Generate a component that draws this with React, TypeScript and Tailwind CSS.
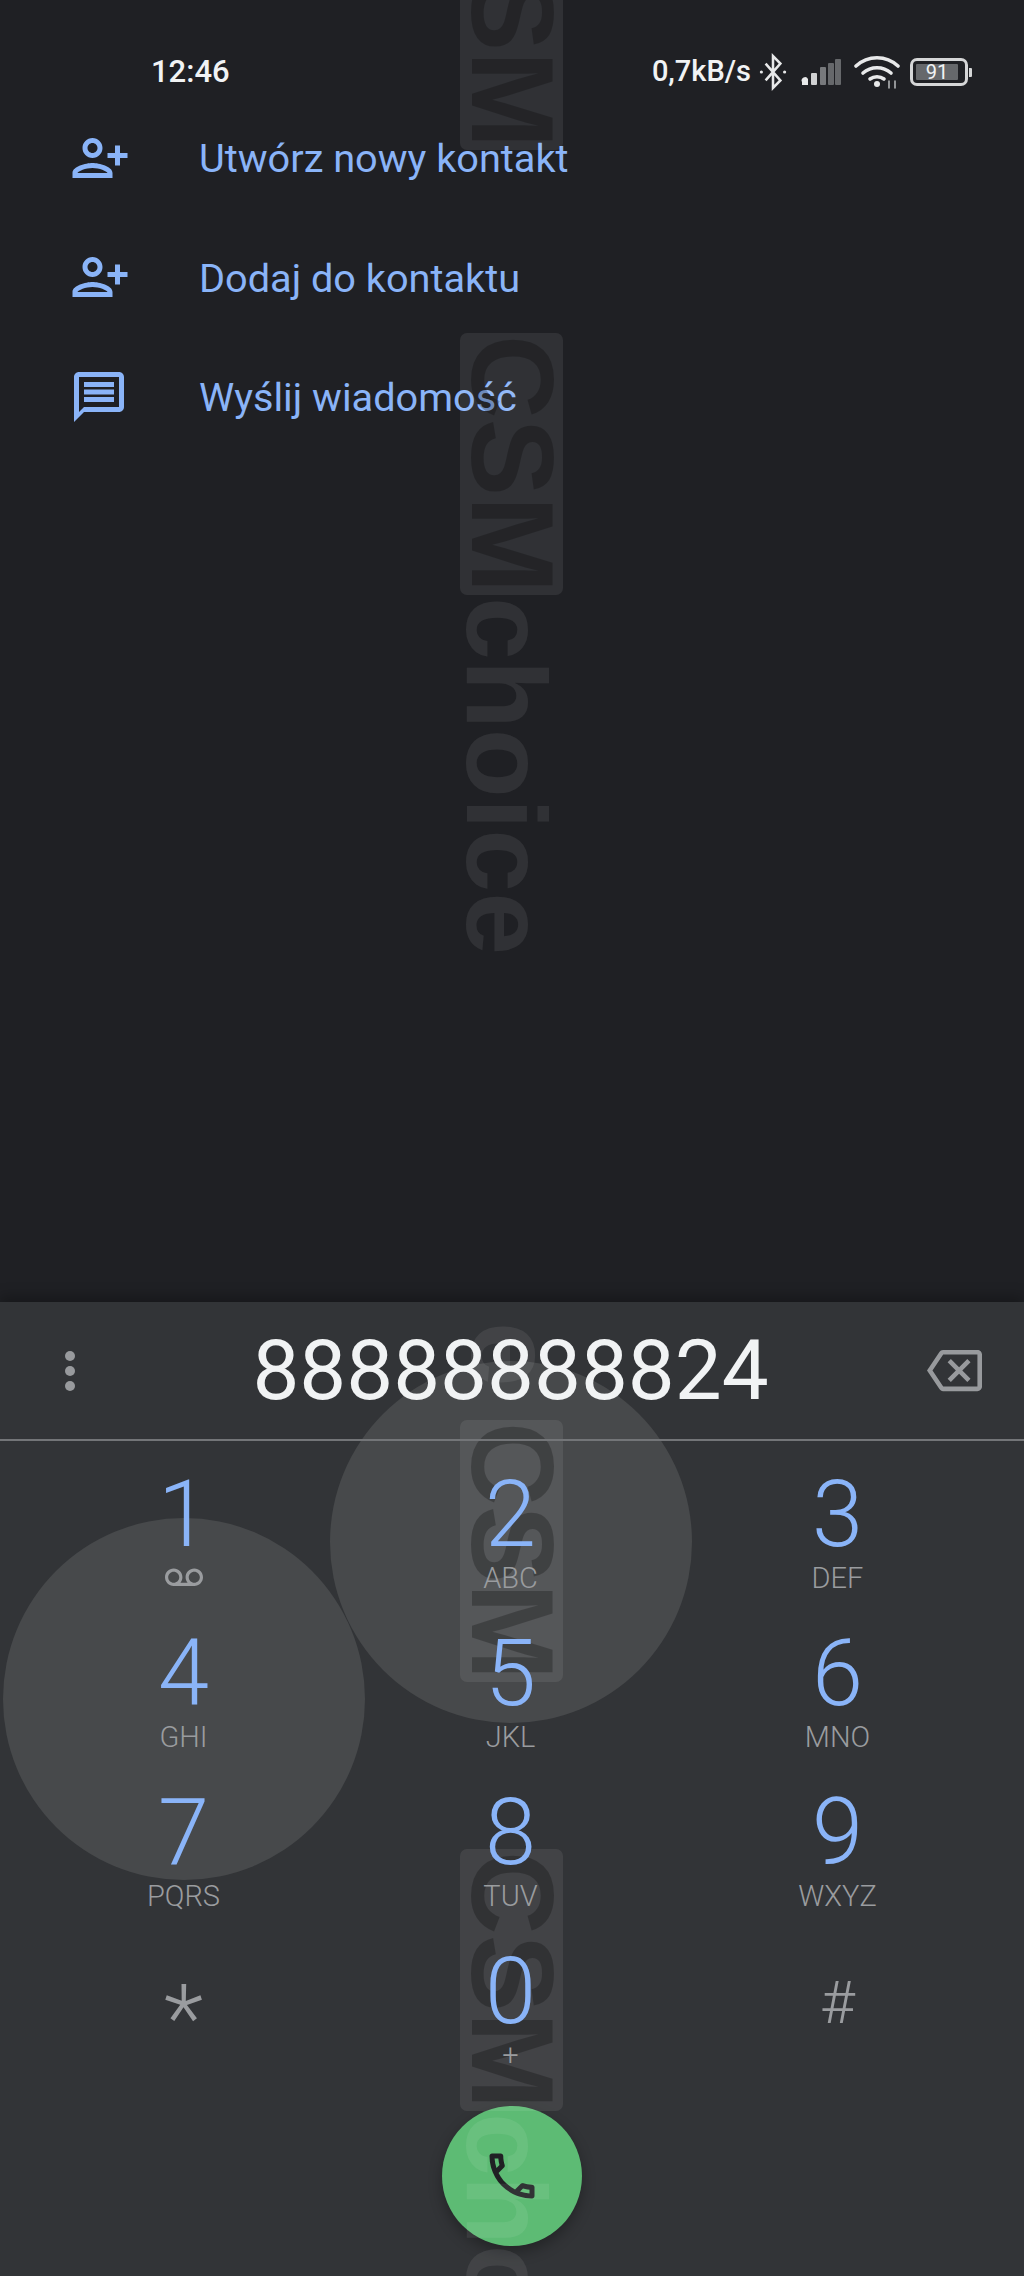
const keys = [
  { digit: "1", label: "" },
  { digit: "2", label: "ABC" },
  { digit: "3", label: "DEF" },
  { digit: "4", label: "GHI" },
  { digit: "5", label: "JKL" },
  { digit: "6", label: "MNO" },
  { digit: "7", label: "PQRS" },
  { digit: "8", label: "TUV" },
  { digit: "9", label: "WXYZ" },
];

function PersonAddIcon() {
  return (
    <svg width="60" height="60" viewBox="0 0 24 24" fill="#8ab4f8">
      <g transform="translate(24 0) scale(-1 1)">
        <path d="M15 12c2.21 0 4-1.79 4-4s-1.79-4-4-4-4 1.79-4 4 1.79 4 4 4zm0-6c1.1 0 2 .9 2 2s-.9 2-2 2-2-.9-2-2 .9-2 2-2zm0 8c-2.67 0-8 1.34-8 4v2h16v-2c0-2.66-5.33-4-8-4zm-6 4c.22-.72 3.31-2 6-2 2.7 0 5.8 1.29 6 2H9zm-3-3v-3h3v-2H6V7H4v3H1v2h3v3h2z" />
      </g>
    </svg>
  );
}

function MessageIcon() {
  return (
    <svg width="60" height="60" viewBox="0 0 24 24" fill="#8ab4f8">
      <path d="M20 2H4c-1.1 0-2 .9-2 2v18l4-4h14c1.1 0 2-.9 2-2V4c0-1.1-.9-2-2-2zm0 14H6l-2 2V4h16v12z" />
      <rect x="6" y="6" width="12" height="2" />
      <rect x="6" y="9" width="12" height="2" />
      <rect x="6" y="12" width="12" height="2" />
    </svg>
  );
}

function StatusIcons() {
  return (
    <div className="flex items-center">
      <svg width="30" height="38" viewBox="0 0 28 36" fill="none" stroke="#e8e9ea" strokeWidth="2.4" className="ml-[7px]">
        <path d="M7 10l14 16-7 7V3l7 7L7 26" />
        <circle cx="3" cy="18" r="1.5" fill="#e8e9ea" stroke="none" />
        <circle cx="25" cy="18" r="1.5" fill="#e8e9ea" stroke="none" />
      </svg>
      <svg width="40" height="28" viewBox="0 0 40 28" className="ml-[13px]">
        <path d="M1 27v-3a3 3 0 0 1 6-3v6z" fill="#e8e9ea" />
        <rect x="10" y="15" width="6" height="12" rx="1" fill="#d0d1d2" />
        <rect x="19" y="9" width="6" height="18" rx="1" fill="#77797c" />
        <rect x="27" y="5" width="6" height="22" rx="1" fill="#66686b" />
        <rect x="34" y="1" width="6" height="26" rx="1" fill="#66686b" />
      </svg>
      <svg width="46" height="34" viewBox="0 0 46 34" fill="none" stroke="#e8e9ea" strokeWidth="3.6" strokeLinecap="round" className="ml-[13px]">
        <path d="M2 11c12-11 30-11 42 0" />
        <path d="M9 18c8-7 20-7 28 0" />
        <path d="M16 24c4-3 10-3 14 0" />
        <circle cx="23" cy="29" r="3" fill="#e8e9ea" stroke="none" />
        <path d="M35 26v7M41 26v7" strokeWidth="1.6" stroke="#b0b2b4" />
      </svg>
      <div className="ml-[10px] flex items-center">
        <div className="w-[58px] h-[28px] rounded-[7px] border-[3px] border-[#d5d6d7] p-[3px]">
          <div className="w-[42px] h-[16px] bg-[#66686b] rounded-[1px] flex items-center justify-center text-[20px] leading-none text-[#f1f3f4]">
            91
          </div>
        </div>
        <div className="w-[3px] h-[9px] ml-[1px] bg-[#d5d6d7] rounded-r-[1px]" />
      </div>
    </div>
  );
}

function Watermark({ top, tail }: { top: string; tail?: boolean }) {
  return (
    <div
      className={`absolute left-[460px] ${top} z-20 w-[103px] flex flex-row items-center pointer-events-none [writing-mode:vertical-rl] font-['Liberation_Sans',sans-serif] font-bold text-[116px] leading-[103px]`}
    >
      <div className="h-[262px] w-[103px] shrink-0 bg-white/8 rounded-[7px] flex items-center justify-center text-black/25">CSM</div>
      {tail && <div className="pt-[2px] pr-[13px] text-[113px] text-white/8">choice</div>}
    </div>
  );
}

export default function App() {
  return (
    <div className="relative w-[1024px] h-[2276px] overflow-hidden bg-[#1f2024] flex flex-col font-['Roboto',sans-serif]">
      {/* status bar */}
      <div className="h-[98px] pt-[46px] pl-[151px] pr-[52px] flex items-start justify-between text-[#f1f3f4]">
        <div className="h-[52px] flex items-center text-[31px] font-medium">12:46</div>
        <div className="h-[52px] flex items-center">
          <span className="text-[29px] font-medium">0,7kB/s</span>
          <StatusIcons />
        </div>
      </div>

      {/* actions */}
      <div className="flex-1 text-[39.7px] text-[#8ab4f8]">
        <div className="h-[119.5px] pl-[70px] flex items-center gap-[69px]">
          <PersonAddIcon />
          <span className="pt-[3px]">Utwórz nowy kontakt</span>
        </div>
        <div className="h-[119.5px] pl-[70px] flex items-center gap-[69px]">
          <PersonAddIcon />
          <span className="pt-[3px]">Dodaj do kontaktu</span>
        </div>
        <div className="h-[119.5px] pl-[69px] flex items-center gap-[70px]">
          <MessageIcon />
          <span className="pt-[3px]">Wyślij wiadomość</span>
        </div>
      </div>

      {/* dialer */}
      <div className="relative h-[974px] bg-[#323437] shadow-[0_-6px_12px_rgba(0,0,0,0.25)]">
        {/* touch ripples */}
        <div className="absolute left-[3px] top-[216px] w-[362px] h-[362px] rounded-full bg-[#47494b]" />
        <div className="absolute left-[330px] top-[59px] w-[362px] h-[362px] rounded-full bg-[#47494b]" />

        <div className="relative z-30 h-[137px] flex items-center">
          <div className="w-[140px] flex flex-col items-center gap-[5px]">
            <div className="w-[10px] h-[10px] rounded-full bg-[#989a9d]" />
            <div className="w-[10px] h-[10px] rounded-full bg-[#989a9d]" />
            <div className="w-[10px] h-[10px] rounded-full bg-[#989a9d]" />
          </div>
          <div className="flex-1 pr-[3px] text-center text-[83.5px] leading-none text-[#f1f3f4]">88888888824</div>
          <div className="w-[140px] flex justify-center">
            <svg width="55" height="55" viewBox="0 0 24 24" fill="#989a9d">
              <path d="M22 3H7c-.69 0-1.23.35-1.59.88L0 12l5.41 8.11c.36.53.9.89 1.59.89h15c1.1 0 2-.9 2-2V5c0-1.1-.9-2-2-2zm0 16H7.07L2.4 12l4.66-7H22v14zm-11.59-2L14 13.41 17.59 17 19 15.59 15.41 12 19 8.41 17.59 7 14 10.59 10.41 7 9 8.41 12.59 12 9 15.59z" />
            </svg>
          </div>
        </div>
        <div className="relative z-30 h-[2px] bg-[#737578]" />

        <div className="relative z-30 pt-[20px] pl-[20px] pr-[23px] grid grid-cols-3 auto-rows-[159px] text-[#9a9c9f]">
          {keys.map((k) => (
            <div key={k.digit} className="flex flex-col items-center">
              <div className="h-[104px] pt-[4px] flex items-center text-[92px] leading-none font-[350] text-[#8ab4f8]">{k.digit}</div>
              <div className="h-[26px] flex items-center text-[29px] leading-none font-[350]">
                {k.label || (
                  <svg width="38" height="38" viewBox="0 0 24 24" fill="#9a9c9f">
                    <path d="M18.5 6C15.46 6 13 8.46 13 11.5c0 1.33.47 2.55 1.26 3.5H9.74c.79-.95 1.26-2.17 1.26-3.5C11 8.46 8.54 6 5.5 6S0 8.46 0 11.5 2.46 17 5.5 17h13c3.04 0 5.5-2.46 5.5-5.5S21.54 6 18.5 6zm-13 9C3.57 15 2 13.43 2 11.5S3.57 8 5.5 8 9 9.57 9 11.5 7.43 15 5.5 15zm13 0c-1.93 0-3.5-1.57-3.5-3.5S16.57 8 18.5 8 22 9.57 22 11.5 20.43 15 18.5 15z" />
                  </svg>
                )}
              </div>
            </div>
          ))}
          <div className="flex flex-col items-center">
            <div className="h-[104px] pt-[58px] flex items-center text-[92px] leading-none font-light">*</div>
          </div>
          <div className="flex flex-col items-center">
            <div className="h-[104px] pt-[4px] flex items-center text-[92px] leading-none font-[350] text-[#8ab4f8]">0</div>
            <div className="h-[26px] flex items-center text-[29px] leading-none font-[350]">+</div>
          </div>
          <div className="flex flex-col items-center">
            <div className="h-[104px] pt-[26px] flex items-center text-[60px] leading-none font-light">#</div>
          </div>
        </div>

        {/* call button */}
        <div className="absolute left-[442px] bottom-[30px] z-10 w-[140px] h-[140px] rounded-full bg-[#5dbb74] shadow-[0_6px_14px_rgba(0,0,0,0.3)] flex items-center justify-center">
          <svg width="60" height="60" viewBox="0 0 24 24" fill="#202124">
            <path d="M6.54 5c.06.89.21 1.76.45 2.59l-1.2 1.2c-.41-1.2-.67-2.47-.76-3.79h1.51m9.86 12.02c.85.24 1.72.39 2.6.45v1.49c-1.32-.09-2.59-.35-3.8-.75l1.2-1.19M7.5 3H4c-.55 0-1 .45-1 1 0 9.39 7.61 17 17 17 .55 0 1-.45 1-1v-3.49c0-.55-.45-1-1-1-1.24 0-2.45-.2-3.57-.57-.1-.04-.21-.05-.31-.05-.26 0-.51.1-.71.29l-2.2 2.2c-2.83-1.45-5.15-3.76-6.59-6.59l2.2-2.2c.28-.28.36-.67.25-1.02C8.7 6.45 8.5 5.25 8.5 4c0-.55-.45-1-1-1z" />
          </svg>
        </div>
      </div>

      {/* watermarks */}
      <Watermark top="top-[-112px]" />
      <Watermark top="top-[333px]" tail />
      <div className="absolute left-[460px] top-[1322px] z-20 w-[103px] flex flex-row items-center [writing-mode:vertical-rl] font-['Liberation_Sans',sans-serif] font-bold text-[116px] leading-[103px] text-white/8">
        e
      </div>
      <Watermark top="top-[1420px]" />
      <Watermark top="top-[1849px]" tail />
    </div>
  );
}
